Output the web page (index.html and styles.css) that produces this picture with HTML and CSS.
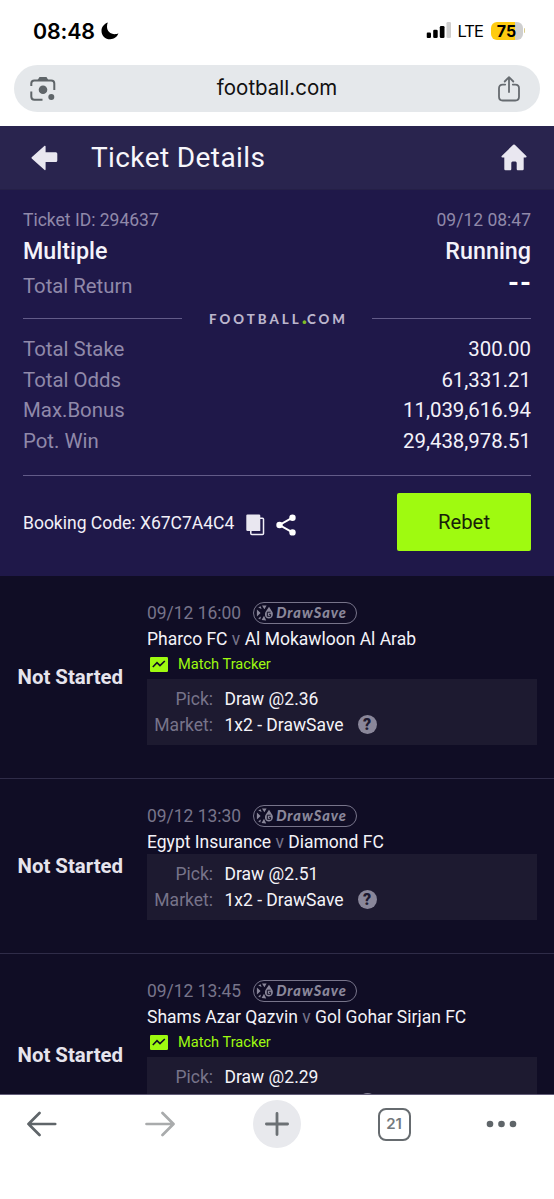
FILE: index.html
```
<!DOCTYPE html>
<html lang="en">
<head>
<meta charset="utf-8">
<title>Ticket Details</title>
<link rel="stylesheet" href="styles.css">
</head>
<body>
<svg class="defs" width="0" height="0">
  <symbol id="drawsave-ball" viewBox="0 0 18 18">
    <path d="M6 1.5 10.6 1.5 8.4 5.3zM.9 5.6 4.6 9 .9 12.4zM5.6 16 8 11.8 10.2 16.4zM2.2 3.6 4.6 2.2 5.6 5zM2.2 14.2 5 12.6 4.2 15.6z"/>
    <path d="M13 2.800 15.900 7.200C18 10 16.600 14.400 12.900 14.400 9 14.400 8 10 10 7.200z"/>
    <path d="M14.600 8.200H11.300V12.300H14.600V10.300H13" class="ball-cut"/>
  </symbol>
  <symbol id="tracker" viewBox="0 0 18 15">
    <rect width="18" height="15" rx="1.2"/>
    <path d="M2.8 10 7 5.6 10 8.6 14.8 4" fill="none" stroke="#100d25" stroke-width="1.6"/>
  </symbol>
</svg>
<div class="screen">
  <div class="statusbar">
    <span class="clock">08:48</span>
    <svg class="moon" width="18" height="18" viewBox="0 0 18 18"><path d="M6.800.6C3.200 1.800.5 5 .5 8.900c0 4.700 3.800 8.300 8.600 8.300 3.900 0 7.200-2.300 8.300-5.900-1.200.7-2.300.9-3.600.9-4.500 0-7.800-3.100-7.800-7.400 0-1.600.2-2.900.8-4.200z"/></svg>
    <svg class="signal" width="25" height="17" viewBox="0 0 25 17"><rect x="0" y="10.500" width="4.500" height="5.500" rx="1.300"/><rect x="6.700" y="7.700" width="4.500" height="8.300" rx="1.300"/><rect x="13.300" y="4" width="4.700" height="12" rx="1.300"/><rect x="20" y="0" width="4.500" height="16" rx="1.300" fill="#cfcfcf"/></svg>
    <span class="network">LTE</span>
    <span class="battery">75</span><span class="battery-tip"></span>
  </div>
  <div class="urlbar">
    <svg width="26" height="26" viewBox="0 0 26 26" fill="none" stroke="#5f6569" stroke-width="2"><path d="M1.300 10V7.600Q1.300 4.500 4.400 4.500H21.200Q24.300 4.500 24.300 7.600V14M1.300 15.500V20.500Q1.300 23.700 4.500 23.700H12.500"/><path d="M7.500 4.200 9.500.9H16.500L18.400 4.200z" fill="#5f6569" stroke="none"/><circle cx="13" cy="13.800" r="4.300" fill="#5f6569" stroke="none"/><circle cx="21.300" cy="20.900" r="3" fill="#5f6569" stroke="none"/></svg>
    <span class="url">football.com</span>
    <svg width="22" height="26" viewBox="0 0 22 26" fill="none" stroke="#666b70" stroke-width="1.800" stroke-linecap="round" stroke-linejoin="round"><path d="M7.200 8.600H4.700Q1 8.600 1 12.300V20.800Q1 24.500 4.700 24.500H17.300Q21 24.500 21 20.800V12.300Q21 8.600 17.300 8.600H14.800M11 16V1.300M6.700 5.500 11 1.200 15.300 5.500"/></svg>
  </div>
  <header class="titlebar">
    <svg width="27" height="26" viewBox="0 0 27 26"><path d="M13.600.7Q14.600.4 14.600 1.500V7.300H24.800Q26.300 7.300 26.300 8.800V15.500Q26.300 17 24.800 17H14.600V24.300Q14.600 25.400 13.600 25.100L.7 13.500Q.2 12.900.7 12.300z" fill="#e9e7f0"/></svg>
    <h1>Ticket Details</h1>
    <svg width="26" height="27" viewBox="0 0 26 27"><path d="M12.200.8Q13 .2 13.800.8L25.300 12Q26.200 13.500 24.500 13.600H22.700V25Q22.700 26.200 21.500 26.200H16.700Q15.700 26.200 15.700 25V19Q15.700 17.500 14.500 17.500H11.600Q10.300 17.500 10.300 19V25Q10.300 26.200 9.300 26.200H4.500Q3.300 26.200 3.300 25V13.600H1.500Q-.2 13.500.7 12z" fill="#e9e7f0"/></svg>
  </header>
  <section class="summary">
    <div class="line meta"><span>Ticket ID: 294637</span><span>09/12 08:47</span></div>
    <div class="line kind"><span>Multiple</span><span>Running</span></div>
    <div class="line return"><span>Total Return</span><b>--</b></div>
    <div class="brand"><i></i><span>FOOTBALL<em>.</em>COM</span><i></i></div>
    <div class="line sum"><span>Total Stake</span><span class="num">300.00</span></div>
    <div class="line sum"><span>Total Odds</span><span class="num">61,331.21</span></div>
    <div class="line sum"><span>Max.Bonus</span><span class="num">11,039,616.94</span></div>
    <div class="line sum"><span>Pot. Win</span><span class="num">29,438,978.51</span></div>
    <div class="booking">
      <span class="code">Booking Code: X67C7A4C4</span>
      <svg class="copy" width="19" height="22" viewBox="0 0 19 22"><rect x="4.800" y="4.300" width="12.700" height="16.200" rx="1" fill="none" stroke="#f2f0f8" stroke-width="1.500"/><path d="M1.500.5H13Q14.300.5 14.300 1.800V17H1.500Q.3 17 .3 15.800V1.800Q.3.5 1.500.5z" fill="#e9e7f0"/></svg>
      <svg class="share" width="20" height="22" viewBox="0 0 20 22" fill="#fff"><path d="M16.500 3.700 3.500 11 16.500 18.400" fill="none" stroke="#fff" stroke-width="2"/><circle cx="16.500" cy="3.700" r="3.200"/><circle cx="3.500" cy="11" r="3.200"/><circle cx="16.500" cy="18.400" r="3.200"/></svg>
      <button class="rebet">Rebet</button>
    </div>
  </section>
  <main class="bets">
    <article class="bet">
      <strong class="state">Not Started</strong>
      <div class="info">
        <div class="when"><span>09/12 16:00</span><span class="pill"><svg width="18" height="18"><use href="#drawsave-ball"/></svg><span>DrawSave</span></span></div>
        <div class="teams">Pharco FC <small>v</small> Al Mokawloon Al Arab</div>
        <div class="track"><svg width="18" height="15"><use href="#tracker"/></svg><span>Match Tracker</span></div>
        <dl class="pick"><dt>Pick:</dt><dd>Draw @2.36</dd><dt>Market:</dt><dd>1x2 - DrawSave<span class="help">?</span></dd></dl>
      </div>
    </article>
    <article class="bet">
      <strong class="state">Not Started</strong>
      <div class="info">
        <div class="when"><span>09/12 13:30</span><span class="pill"><svg width="18" height="18"><use href="#drawsave-ball"/></svg><span>DrawSave</span></span></div>
        <div class="teams">Egypt Insurance <small>v</small> Diamond FC</div>
        <dl class="pick"><dt>Pick:</dt><dd>Draw @2.51</dd><dt>Market:</dt><dd>1x2 - DrawSave<span class="help">?</span></dd></dl>
      </div>
    </article>
    <article class="bet">
      <strong class="state">Not Started</strong>
      <div class="info">
        <div class="when"><span>09/12 13:45</span><span class="pill"><svg width="18" height="18"><use href="#drawsave-ball"/></svg><span>DrawSave</span></span></div>
        <div class="teams">Shams Azar Qazvin <small>v</small> Gol Gohar Sirjan FC</div>
        <div class="track"><svg width="18" height="15"><use href="#tracker"/></svg><span>Match Tracker</span></div>
        <dl class="pick"><dt>Pick:</dt><dd>Draw @2.29</dd><dt>Market:</dt><dd>1x2 - DrawSave<span class="help">?</span></dd></dl>
      </div>
    </article>
  </main>
  <nav class="toolbar">
    <svg width="30" height="26" viewBox="0 0 30 26" fill="none" stroke="#5f6569" stroke-width="2.700" stroke-linecap="round" stroke-linejoin="round"><path d="M28.200 13H1.500M12.500 2 1.500 13 12.500 24"/></svg>
    <svg class="forward" width="30" height="26" viewBox="0 0 30 26" fill="none" stroke="#a9abac" stroke-width="2.700" stroke-linecap="round" stroke-linejoin="round"><path d="M1.500 13H28.200M17.500 2 28.500 13 17.500 24"/></svg>
    <span class="newtab"><svg width="24" height="24" viewBox="0 0 24 24" stroke="#6b7074" stroke-width="2.800" stroke-linecap="round"><path d="M12 1.400V22.600M1.400 12H22.600"/></svg></span>
    <span class="tabs">21</span>
    <svg class="more" width="31" height="8" viewBox="0 0 31 8" fill="#5f6569"><circle cx="4" cy="4" r="3.300"/><circle cx="15.500" cy="4" r="3.300"/><circle cx="27" cy="4" r="3.300"/></svg>
  </nav>
</div>
</body>
</html>
```
FILE: styles.css
```
* { box-sizing: border-box; }
body { margin: 0; background: #fff; font-family: Roboto, sans-serif; }
svg { display: block; flex: none; }
.defs { position: absolute; }
.screen { width: 554px; height: 1199px; display: flex; flex-direction: column; overflow: hidden; }
.screen > * { flex: none; }

.statusbar { height: 65px; padding: 0 30px 4px 33px; display: flex; align-items: center; font-family: Inter, sans-serif; color: #000; }
.clock { font-size: 21.400px; font-weight: 600; line-height: 24px; letter-spacing: -.15px; }
.moon { margin-left: 6px; }
.signal { margin-left: auto; }
.network { margin-left: 6px; font-size: 16.500px; letter-spacing: -.9px; }
.battery { margin-left: 9px; width: 32px; height: 18px; margin-right: -2px; border-radius: 6px; background: linear-gradient(90deg, #fecb10 75%, #cfcfcf 75%); font-size: 16px; font-weight: 700; line-height: 18px; text-align: center; }
.battery-tip { width: 1.500px; height: 5px; margin-left: 3px; margin-right: -1px; border-radius: 0 2px 2px 0; background: #d9cc8c; }
.signal, .network { transform: translateX(1.500px); }

.urlbar { height: 47px; margin: 0 14px 14px; padding: 0 20px 0 16px; border-radius: 24px; background: #e5e8eb; display: flex; align-items: center; justify-content: space-between; }
.url { font: 20.500px/24px Inter, sans-serif; color: #111; padding-bottom: 2px; }

.titlebar { height: 64px; padding: 0 27px 0 31px; background: #29244e; display: flex; align-items: center; border-bottom: 1px solid #252047; }
.titlebar h1 { margin: 0 auto 0 33px; font-size: 28px; font-weight: 400; line-height: 36px; letter-spacing: .4px; color: #f7f6fb; }

.summary { height: 386px; padding: 18px 23px 0; background: #1f1849; color: #9089a9; }
.line { display: flex; justify-content: space-between; align-items: center; }
.meta { height: 24px; font-size: 17.500px; }
.kind { height: 37px; font-size: 23.300px; font-weight: 500; color: #f4f2fa; }
.return { height: 34px; font-size: 20.300px; }
.return b { font-size: 28px; font-weight: 700; color: #fff; letter-spacing: 1px; line-height: 30px; margin-right: -1px; transform: translateY(-3px); }
.brand { height: 30.500px; display: flex; align-items: center; justify-content: space-between; font: 900 13.300px/16px Lato, sans-serif; letter-spacing: 3px; color: #bbb5cc; }
.brand i { width: 159px; height: 1px; background: #625b88; }
.brand span { margin-right: -3px; padding-top: 1px; }
.brand em { font-style: normal; font-size: 22px; line-height: 0; letter-spacing: 0; color: #7fbd26; }
.sum { height: 30.700px; font-size: 20.400px; }
.sum .num { color: #f4f2fa; }
.booking { margin-top: 18.700px; padding-top: 17.500px; border-top: 1px solid #625b88; display: flex; align-items: center; }
.code { font-size: 17.500px; color: #f2f0f8; padding-top: 2px; }
.copy { margin: 6px 11px 0 12px; }
.share { margin-top: 6px; }
.rebet { margin-left: auto; width: 134px; height: 58px; border: 0; border-radius: 2px; background: #9ffa10; color: #172108; font: 20.300px/24px Roboto, sans-serif; }

.bets { height: 519px; overflow: hidden; background: #100d25; border-bottom: 1px solid #625d78; }
.bet { display: flex; align-items: center; padding: 24px 17px 33.500px; border-bottom: 1px solid #2f2c48; }
.state { width: 130px; padding: 10px 0 0 .5px; font-size: 20.400px; line-height: 24px; font-weight: 700; color: #e6e4ed; }
.info { flex: 1; min-width: 0; }
.when { height: 25.500px; display: flex; align-items: center; font-size: 17.450px; color: #77748a; }
.pill { width: 104px; height: 22px; margin-left: 12px; padding-left: 2px; border: 1.500px solid #77748a; border-radius: 11px; display: flex; align-items: center; gap: 2px; font: italic 900 14.500px/18px Lato, sans-serif; letter-spacing: 1px; color: #8a879a; fill: #8a879a; }
.ball-cut { fill: none; stroke: #100d25; stroke-width: 1; }
.teams { height: 25.500px; font-size: 17.500px; line-height: 26px; color: #f4f3f8; white-space: nowrap; }
.teams small { font-size: 17.450px; color: #77748a; }
.track { height: 28px; padding: 0 0 2px 3px; display: flex; align-items: center; gap: 10px; font-size: 14.600px; color: #9ffa10; fill: #9ffa10; }
.pick { margin: 0; height: 65.500px; padding: 6.500px 0; background: #1d1a30; display: grid; grid-template-columns: 66px 1fr; column-gap: 11.500px; grid-auto-rows: 26px; font-size: 17.500px; line-height: 26px; }
.pick dt { text-align: right; color: #77748a; }
.pick dd { margin: 0; color: #f4f3f8; display: flex; align-items: center; }
.help { margin-left: 14px; width: 19px; height: 19px; border-radius: 50%; background: #8a879a; color: #1d1a30; font-size: 16px; font-weight: 900; line-height: 19px; text-align: center; }

.toolbar { height: 104px; padding: 5px 0 0 27px; display: flex; align-items: flex-start; }
.toolbar > svg { height: 48px; }
.forward { margin-left: 88px; }
.newtab { width: 48px; height: 48px; margin-left: 78px; border-radius: 50%; background: #e8e9ed; display: grid; place-items: center; }
.tabs { width: 33px; height: 33px; margin: 7.500px 0 0 76.500px; border: 2.500px solid #666b6f; border-radius: 8px; font: 600 15px/28px Inter, sans-serif; color: #74797d; text-align: center; }
.more { margin-left: 75.500px; }
```
